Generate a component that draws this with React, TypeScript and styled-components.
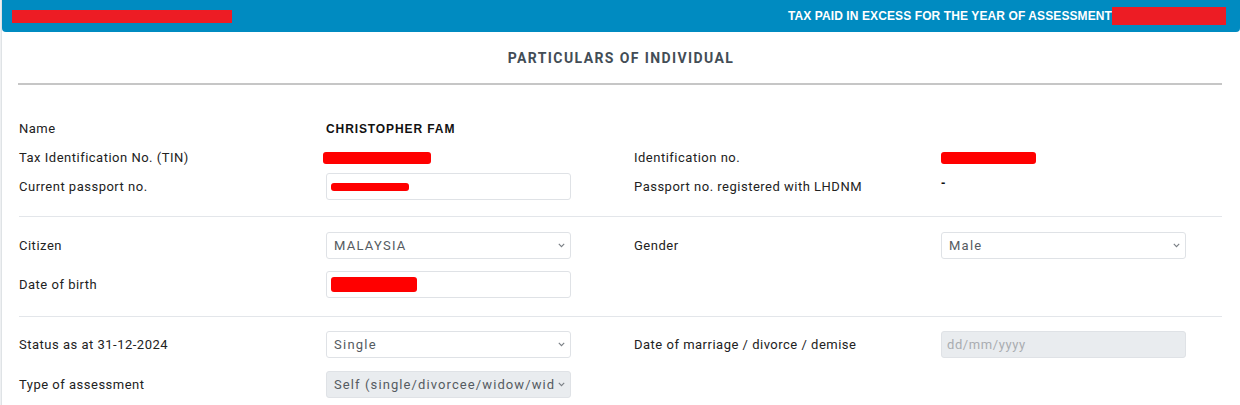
import styled, { createGlobalStyle } from "styled-components";

const GlobalStyle = createGlobalStyle`
  body {
    margin: 0;
    background: #ffffff;
    font-family: Roboto, "Liberation Sans", Arial, sans-serif;
  }
`;

const Page = styled.div`
  width: 1240px;
  height: 405px;
  overflow: hidden;
  padding-left: 1px;
  box-sizing: border-box;
  background: #eef0f2;
`;

const Card = styled.div`
  background: #ffffff;
  border-left: 1px solid #dfe3e6;
  height: 100%;
`;

const Header = styled.div`
  height: 32px;
  background: #008bc1;
  border-radius: 0 0 4px 4px;
  display: flex;
  align-items: center;
  justify-content: space-between;
  padding: 0 14px 0 10px;
`;

const HeaderTitle = styled.div`
  display: flex;
  align-items: center;
  font-family: "Liberation Sans", Arial, sans-serif;
  font-size: 12px;
  font-weight: 700;
  letter-spacing: 0.1px;
  color: #ffffff;
`;

const Redact = styled.span<{ $w: number; $h: number; $tone?: string; $round?: boolean }>`
  display: inline-block;
  width: ${(p) => p.$w}px;
  height: ${(p) => p.$h}px;
  background: ${(p) => p.$tone ?? "#ff0000"};
  border-radius: ${(p) => (p.$round ? "3px" : "0")};
`;

const SectionTitle = styled.h2`
  margin: 0;
  padding-top: 18px;
  text-align: center;
  font-size: 14px;
  line-height: 17px;
  font-weight: 700;
  letter-spacing: 1.4px;
  color: #434d56;
`;

const Rule = styled.hr`
  margin: 16px 18px 0 16px;
  border: 0;
  height: 2px;
  background: #c6c6c6;
`;

const Section = styled.div<{ $top: number; $gap: number; $bottom: number; $divider?: boolean }>`
  margin: 0 18px 0 17px;
  padding: ${(p) => p.$top}px 0 ${(p) => p.$bottom}px;
  border-top: ${(p) => (p.$divider ? "1px solid #e3e6ea" : "none")};
  display: grid;
  grid-template-columns: 307px 245px 63px 307px 245px;
  row-gap: ${(p) => p.$gap}px;
  align-items: center;
`;

const Label = styled.div<{ $col?: number }>`
  grid-column: ${(p) => p.$col ?? 1};
  font-size: 13px;
  letter-spacing: 0.5px;
  color: #222222;
  min-height: 27px;
  display: flex;
  align-items: center;
`;

const Value = styled.div<{ $col?: number; $top?: boolean }>`
  grid-column: ${(p) => p.$col ?? 2};
  min-height: 27px;
  display: flex;
  align-items: ${(p) => (p.$top ? "flex-start" : "center")};
  font-family: "Liberation Sans", Arial, sans-serif;
  font-size: 12px;
  font-weight: 700;
  letter-spacing: 0.9px;
  color: #111111;
`;

const Dash = styled.span`
  font-size: 13px;
  font-weight: 700;
  line-height: 18px;
  margin-top: 1px;
`;

const FieldBox = styled.div<{ $col?: number }>`
  grid-column: ${(p) => p.$col ?? 2};
  height: 27px;
  box-sizing: border-box;
  border: 1px solid #dfe2e6;
  border-radius: 3px;
  background: #ffffff;
  display: flex;
  align-items: center;
  padding-left: 4px;
`;

const SelectWrap = styled.div<{ $col?: number }>`
  grid-column: ${(p) => p.$col ?? 2};
  position: relative;
  height: 27px;
`;

const Select = styled.select`
  width: 100%;
  height: 27px;
  box-sizing: border-box;
  appearance: none;
  border: 1px solid #dfe2e6;
  border-radius: 3px;
  background: #ffffff;
  padding: 0 16px 0 7px;
  font-family: Roboto, "Liberation Sans", Arial, sans-serif;
  font-size: 13px;
  letter-spacing: 1.25px;
  color: #555b61;
  outline: none;
  &:disabled {
    background: #e9ecef;
    opacity: 1;
    color: #555b61;
    letter-spacing: 1.1px;
    padding-right: 15px;
  }
`;

const Chevron = styled.svg`
  position: absolute;
  right: 6px;
  top: 11px;
  width: 7px;
  height: 5px;
  pointer-events: none;
`;

const DateInput = styled.input<{ $col?: number }>`
  grid-column: ${(p) => p.$col ?? 2};
  height: 27px;
  box-sizing: border-box;
  border: 1px solid #dfe2e6;
  border-radius: 3px;
  background: #e9ecef;
  padding: 0 5px;
  font-family: Roboto, "Liberation Sans", Arial, sans-serif;
  font-size: 13px;
  letter-spacing: 0.6px;
  &::placeholder {
    color: #a9adb1;
  }
`;

function Dropdown({ col, value, disabled }: { col?: number; value: string; disabled?: boolean }) {
  return (
    <SelectWrap $col={col}>
      <Select defaultValue={value} disabled={disabled}>
        <option>{value}</option>
      </Select>
      <Chevron viewBox="0 0 7 5">
        <path d="M0.8 0.8 L3.5 3.7 L6.2 0.8" fill="none" stroke="#7a7f85" strokeWidth="1.1" />
      </Chevron>
    </SelectWrap>
  );
}

export default function App() {
  return (
    <>
      <GlobalStyle />
      <Page>
        <Card>
          <Header>
            <Redact $w={220} $h={13} $tone="#ed1c24" />
            <HeaderTitle>
              TAX PAID IN EXCESS FOR THE YEAR OF ASSESSMENT
              <Redact $w={114} $h={18} $tone="#ed1c24" />
            </HeaderTitle>
          </Header>

          <SectionTitle>PARTICULARS OF INDIVIDUAL</SectionTitle>
          <Rule />

          <Section $top={30} $gap={2} $bottom={16}>
            <Label>Name</Label>
            <Value>CHRISTOPHER FAM</Value>

            <Label>Tax Identification No. (TIN)</Label>
            <Value>
              <Redact $w={108} $h={12} $round style={{ marginLeft: -3 }} />
            </Value>
            <Label $col={4}>Identification no.</Label>
            <Value $col={5}>
              <Redact $w={95} $h={12} $round />
            </Value>

            <Label>Current passport no.</Label>
            <FieldBox>
              <Redact $w={78} $h={8} $round />
            </FieldBox>
            <Label $col={4}>Passport no. registered with LHDNM</Label>
            <Value $col={5} $top>
              <Dash>-</Dash>
            </Value>
          </Section>

          <Section $top={15} $gap={12} $bottom={18} $divider>
            <Label>Citizen</Label>
            <Dropdown value="MALAYSIA" />
            <Label $col={4}>Gender</Label>
            <Dropdown col={5} value="Male" />

            <Label>Date of birth</Label>
            <FieldBox>
              <Redact $w={86} $h={15} $round />
            </FieldBox>
          </Section>

          <Section $top={14} $gap={13} $bottom={10} $divider>
            <Label>Status as at 31-12-2024</Label>
            <Dropdown value="Single" />
            <Label $col={4}>Date of marriage / divorce / demise</Label>
            <DateInput $col={5} placeholder="dd/mm/yyyy" disabled />

            <Label>Type of assessment</Label>
            <Dropdown value="Self (single/divorcee/widow/widower)" disabled />
          </Section>
        </Card>
      </Page>
    </>
  );
}
